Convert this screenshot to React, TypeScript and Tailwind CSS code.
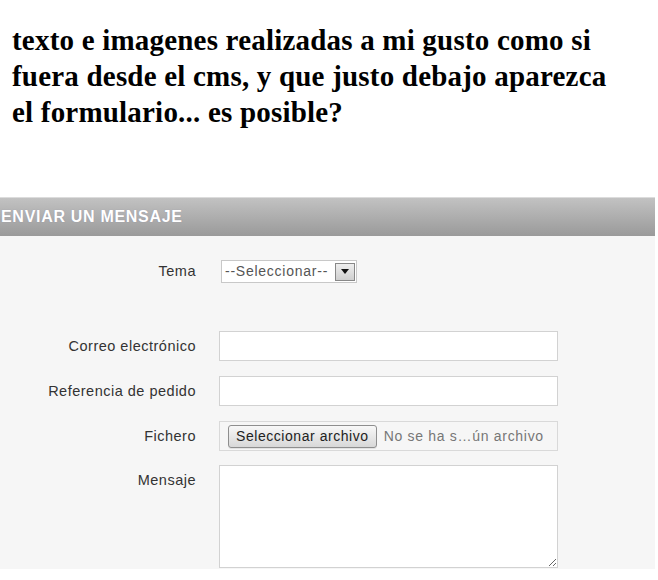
import React from "react";

export default function App() {
  const label =
    "w-[196px] shrink-0 text-right text-[14.5px] tracking-[0.5px] text-[#333] leading-[30px]";
  return (
    <div className="w-[655px] bg-white" style={{ fontFamily: '"Liberation Sans", Arial, sans-serif' }}>
      <div
        className="pt-[22px] pl-[12px] text-[29px] leading-[36px] tracking-[0.2px] font-bold text-black"
        style={{ fontFamily: '"Liberation Serif", "Times New Roman", serif' }}
      >
        texto e imagenes realizadas a mi gusto como si
        <br />
        fuera desde el cms, y que justo debajo aparezca
        <br />
        el formulario... es posible?
      </div>

      <div className="mt-[67px] border-t border-[#dcdcdc] h-[39px] bg-gradient-to-b from-[#c2c2c2] to-[#9a9a9a] flex items-center pl-[1px]">
        <span className="text-white font-bold text-[16px] tracking-[0.7px] leading-none [text-shadow:0_0_1px_rgba(120,120,160,0.6)]">
          ENVIAR UN MENSAJE
        </span>
      </div>

      <div className="bg-[#f6f6f6] h-[333px] pt-[24px]">
        <div className="flex items-center gap-[23px] h-[23px]">
          <div className="w-[196px] shrink-0 text-right text-[14.5px] tracking-[0.5px] text-[#333]">Tema</div>
          <div className="ml-[2px] w-[136px] h-[23px] bg-white border border-[#c8c8c8] flex items-center justify-between pl-[3px] pr-[1px]">
            <span className="text-[14px] tracking-[0.75px] text-[#555]">--Seleccionar--</span>
            <span className="w-[20px] h-[18px] border border-[#888] bg-gradient-to-b from-[#eee] to-[#cfcfcf] flex items-center justify-center">
              <svg width="8" height="5" viewBox="0 0 8 5">
                <path d="M0 0H8L4 5Z" fill="#111" />
              </svg>
            </span>
          </div>
        </div>

        <div className="flex gap-[23px] mt-[48px]">
          <div className={label}>Correo electrónico</div>
          <div className="w-[339px] h-[30px] bg-white border border-[#d2d2d2]" />
        </div>

        <div className="flex gap-[23px] mt-[15px]">
          <div className={label}>Referencia de pedido</div>
          <div className="w-[339px] h-[30px] bg-white border border-[#d2d2d2]" />
        </div>

        <div className="flex gap-[23px] mt-[15px]">
          <div className={label}>Fichero</div>
          <div className="w-[339px] h-[30px] bg-[#f6f6f6] border border-[#d9d9d9] flex items-center pl-[8px] gap-[7px]">
            <span className="h-[23px] px-[7px] rounded-[3px] border border-[#8e8e8e] bg-gradient-to-b from-[#f8f8f8] to-[#d8d8d8] text-[14px] tracking-[0.55px] text-[#222] leading-[21px] shadow-[0_1px_0_rgba(0,0,0,0.08)]">
              Seleccionar archivo
            </span>
            <span className="text-[14px] tracking-[0.7px] text-[#777]">No se ha s…ún archivo</span>
          </div>
        </div>

        <div className="flex gap-[23px] mt-[14px]">
          <div className={label}>Mensaje</div>
          <textarea className="w-[339px] h-[103px] bg-white border border-[#d2d2d2] outline-none" />
        </div>
      </div>
    </div>
  );
}
